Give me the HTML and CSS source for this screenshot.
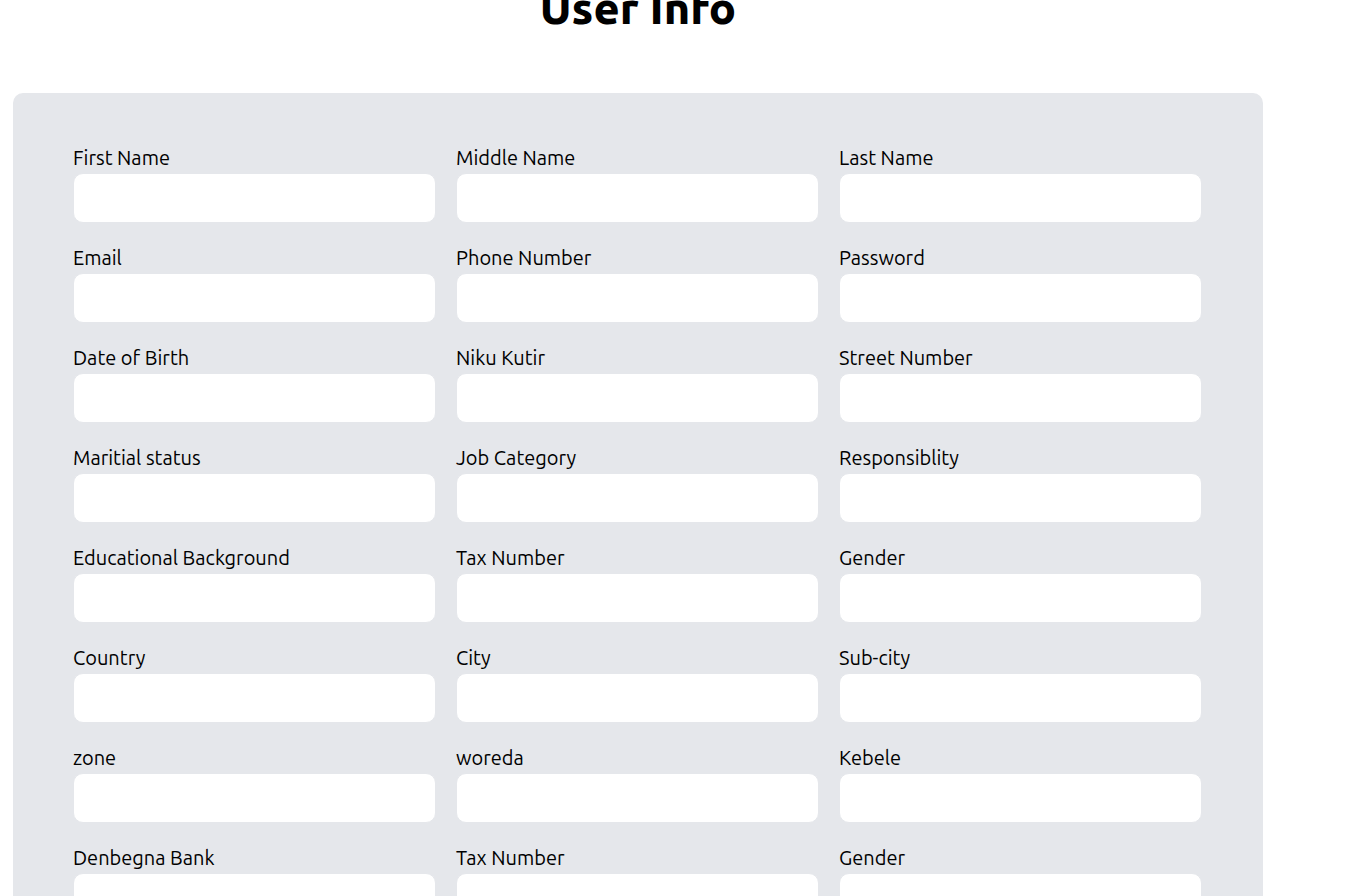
FILE: index.html
```html
<!DOCTYPE html>
<html lang="en">
<head>
<meta charset="utf-8">
<title>User Info</title>
<link rel="stylesheet" href="styles.css">
</head>
<body>
<main class="page">
<h1 class="title">User Info</h1>
<form class="panel">
<div class="field"><label for="f1">First Name</label><input id="f1" type="text"></div>
<div class="field"><label for="f2">Middle Name</label><input id="f2" type="text"></div>
<div class="field"><label for="f3">Last Name</label><input id="f3" type="text"></div>
<div class="field"><label for="f4">Email</label><input id="f4" type="email"></div>
<div class="field"><label for="f5">Phone Number</label><input id="f5" type="tel"></div>
<div class="field"><label for="f6">Password</label><input id="f6" type="password"></div>
<div class="field"><label for="f7">Date of Birth</label><input id="f7" type="text"></div>
<div class="field"><label for="f8">Niku Kutir</label><input id="f8" type="text"></div>
<div class="field"><label for="f9">Street Number</label><input id="f9" type="text"></div>
<div class="field"><label for="f10">Maritial status</label><input id="f10" type="text"></div>
<div class="field"><label for="f11">Job Category</label><input id="f11" type="text"></div>
<div class="field"><label for="f12">Responsiblity</label><input id="f12" type="text"></div>
<div class="field"><label for="f13">Educational Background</label><input id="f13" type="text"></div>
<div class="field"><label for="f14">Tax Number</label><input id="f14" type="text"></div>
<div class="field"><label for="f15">Gender</label><input id="f15" type="text"></div>
<div class="field"><label for="f16">Country</label><input id="f16" type="text"></div>
<div class="field"><label for="f17">City</label><input id="f17" type="text"></div>
<div class="field"><label for="f18">Sub-city</label><input id="f18" type="text"></div>
<div class="field"><label for="f19">zone</label><input id="f19" type="text"></div>
<div class="field"><label for="f20">woreda</label><input id="f20" type="text"></div>
<div class="field"><label for="f21">Kebele</label><input id="f21" type="text"></div>
<div class="field"><label for="f22">Denbegna Bank</label><input id="f22" type="text"></div>
<div class="field"><label for="f23">Tax Number</label><input id="f23" type="text"></div>
<div class="field"><label for="f24">Gender</label><input id="f24" type="text"></div>
</form>
</main>
</body>
</html>
```
FILE: styles.css
```css
* { box-sizing: border-box; }
html { overflow: hidden; }
body {
  margin: 0;
  background: #fff;
  color: #000;
  font-family: Ubuntu, "Noto Sans", "Open Sans", sans-serif;
}
.page {
  margin: 0 101px 0 13px;
}
.title {
  margin: -16px 0 61px;
  font-size: 45px;
  line-height: 48px;
  font-weight: 800;
  text-align: center;
}
.panel {
  display: grid;
  grid-template-columns: repeat(3, 1fr);
  gap: 20px;
  padding: 50px 61px 50px 60px;
  background: #e5e7eb;
  border-radius: 10px;
}
.field {
  display: flex;
  flex-direction: column;
}
.field label {
  font-size: 20px;
  font-weight: 400;
  line-height: 30px;
}
.field input {
  width: 100%;
  height: 50px;
  padding: 0 12px;
  border: 1px solid #e5e7eb;
  border-radius: 10px;
  background: #fff;
  font: inherit;
  font-size: 20px;
}
```
